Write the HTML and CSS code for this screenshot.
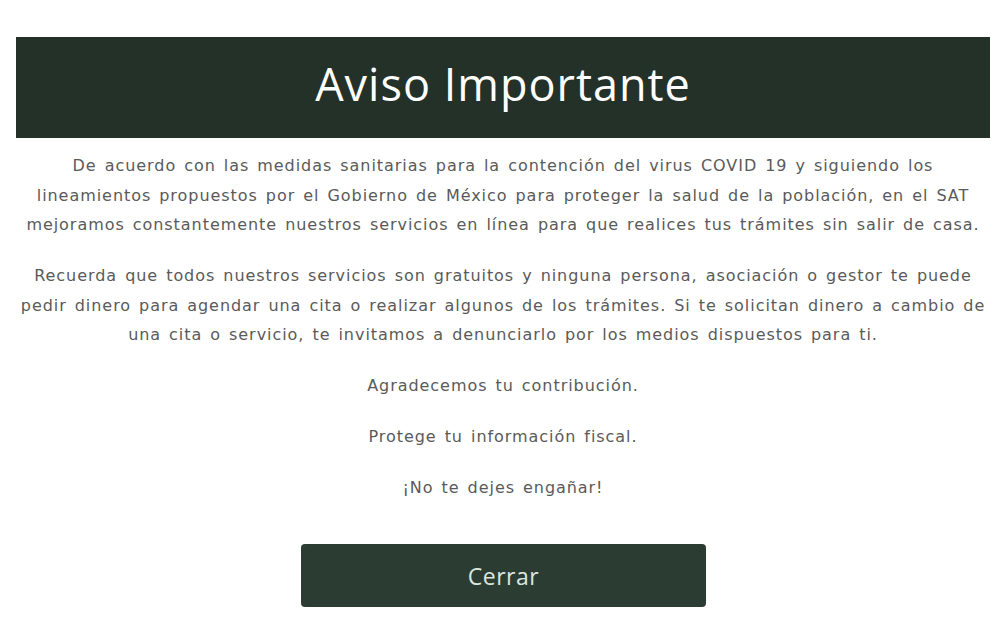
FILE: index.html
```html
<!DOCTYPE html>
<html lang="es">
<head>
<meta charset="utf-8">
<title>Aviso Importante</title>
<link rel="stylesheet" href="styles.css">
</head>
<body>
<div class="modal">
  <header class="modal-header">
    <h1 class="modal-title">Aviso Importante</h1>
  </header>
  <div class="modal-body">
    <p class="para">De acuerdo con las medidas sanitarias para la contención del virus COVID 19 y siguiendo los<br>lineamientos propuestos por el Gobierno de México para proteger la salud de la población, en el SAT<br>mejoramos constantemente nuestros servicios en línea para que realices tus trámites sin salir de casa.</p>
    <p class="para">Recuerda que todos nuestros servicios son gratuitos y ninguna persona, asociación o gestor te puede<br>pedir dinero para agendar una cita o realizar algunos de los trámites. Si te solicitan dinero a cambio de<br>una cita o servicio, te invitamos a denunciarlo por los medios dispuestos para ti.</p>
    <p class="para">Agradecemos tu contribución.</p>
    <p class="para">Protege tu información fiscal.</p>
    <p class="para">¡No te dejes engañar!</p>
  </div>
  <div class="modal-footer">
    <button class="btn-close" type="button">Cerrar</button>
  </div>
</div>
</body>
</html>
```

FILE: styles.css
```css
html, body {
  margin: 0;
  padding: 0;
  background: #ffffff;
}
body {
  font-family: "DejaVu Sans", "Open Sans", sans-serif;
}
.modal {
  margin: 37px 17px 0 16px;
}
.modal-header {
  background: #243128;
  height: 101px;
  display: flex;
  align-items: center;
  justify-content: center;
}
.modal-title {
  margin: 0;
  color: #ffffff;
  font-family: "Open Sans", "DejaVu Sans", sans-serif;
  font-weight: 400;
  font-size: 45px;
  letter-spacing: 1px;
  line-height: 1;
  padding-bottom: 8px;
}
.modal-body {
  padding-top: 13px;
  text-align: center;
  color: #5a5a5a;
  font-size: 16px;
  letter-spacing: 0.95px;
  word-spacing: 2px;
  line-height: 29.5px;
  white-space: nowrap;
}
.para {
  margin: 0 0 21.5px 0;
}
.modal-footer {
  display: flex;
  justify-content: center;
  padding-top: 20px;
  padding-left: 1px;
}
.btn-close {
  width: 405px;
  height: 63px;
  border: none;
  border-radius: 4px;
  background: #2b3c33;
  color: #dbe6df;
  font-family: "Open Sans", "DejaVu Sans", sans-serif;
  font-size: 23px;
  letter-spacing: 0.5px;
  cursor: pointer;
}
```
